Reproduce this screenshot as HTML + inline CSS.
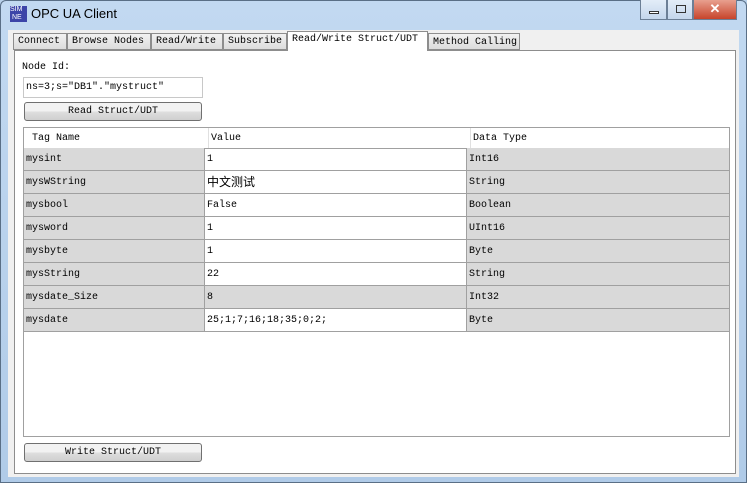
<!DOCTYPE html><html><head><meta charset="utf-8"><style>
*{margin:0;padding:0;box-sizing:border-box}
body{width:747px;height:483px;overflow:hidden;background:#b9d1ea;font-family:"Liberation Mono","Noto Sans CJK SC",monospace;font-size:10px;color:#000;position:relative}
.frame{position:absolute;left:0;top:0;width:747px;height:483px;background:linear-gradient(#c2d9f1,#b0cbe8);border:1px solid #5a6f86;border-radius:6px 6px 0 0}
.title{position:absolute;left:31px;top:6px;font-family:"Liberation Sans",sans-serif;font-size:13px}
.icon{position:absolute;left:10px;top:6px;width:17px;height:16px;background:#3c44a8;color:#fff;font:7px "Liberation Sans",sans-serif;line-height:8px}
.wb{position:absolute;top:0;height:20px;border:1px solid #6c7f96;border-top:none}
.client{position:absolute;left:8px;top:30px;width:731px;height:447px;background:#f0f0f0}
.tab{position:absolute;top:33px;height:17px;background:linear-gradient(#f2f2f2,#dcdcdc);border:1px solid #8d8d8d;line-height:16px;padding-left:4px;white-space:nowrap}
.panel{position:absolute;left:14px;top:50px;width:722px;height:424px;background:#fff;border:1px solid #8d8d8d}
.btn{position:absolute;height:19px;border:1px solid #707070;border-radius:3px;background:linear-gradient(#f2f2f2 45%,#dddddd 55%,#cfcfcf);text-align:center;line-height:17px}
.grid{position:absolute;left:23px;top:127px;width:707px;height:310px;border:1px solid #a0a0a0;background:#fff}
.r{position:absolute;left:0;height:23px;width:705px;border-bottom:1px solid #a0a0a0}
.c{position:absolute;top:0;height:22px;line-height:24px;padding-left:2px;white-space:nowrap}
.g{background:#d9d9d9}
</style></head><body>
<div class="frame"></div>
<div class="icon">SIM<br>&nbsp;NE</div>
<div class="title">OPC UA Client</div>
<div class="wb" style="left:640px;width:27px;background:linear-gradient(#e3edf8,#c4d6ec)"><div style="position:absolute;left:8px;top:11px;width:10px;height:3px;border:1px solid #333;background:#fff"></div></div>
<div class="wb" style="left:667px;width:26px;background:linear-gradient(#e3edf8,#c4d6ec)"><div style="position:absolute;left:8px;top:5px;width:10px;height:8px;border:1px solid #333"></div></div>
<div class="wb" style="left:693px;width:44px;background:linear-gradient(#e8a08f,#c7442b);color:#fff;text-align:center;font:bold 13px 'Liberation Sans',sans-serif;line-height:18px">✕</div>
<div class="client"></div>
<div class="panel"></div>
<div class="tab" style="left:13px;width:54px">Connect</div>
<div class="tab" style="left:67px;width:84px">Browse Nodes</div>
<div class="tab" style="left:151px;width:72px">Read/Write</div>
<div class="tab" style="left:223px;width:64px">Subscribe</div>
<div class="tab" style="left:287px;top:31px;height:20px;width:141px;background:#fff;border-bottom:none;line-height:16px">Read/Write Struct/UDT</div>
<div class="tab" style="left:428px;width:92px;line-height:18px">Method Calling</div>
<div style="position:absolute;left:22px;top:62px">Node Id:</div>
<div style="position:absolute;left:23px;top:77px;width:180px;height:21px;border:1px solid #c8c8c8;line-height:19px;padding-left:2px">ns=3;s="DB1"."mystruct"</div>
<div class="btn" style="left:24px;top:102px;width:178px">Read Struct/UDT</div>
<div class="grid">
<div class="r" style="top:0;height:21px"><div class="c" style="left:6px;height:20px;line-height:22px">Tag Name</div><div class="c" style="left:184px;height:20px;line-height:22px;border-left:1px solid #e0e0e0">Value</div><div class="c" style="left:446px;height:20px;line-height:22px;border-left:1px solid #e0e0e0">Data Type</div></div>
</div>
<div style="position:absolute;left:24px;top:148px;width:705px">
<div class="r" style="top:0"><div class="c g" style="left:0;width:180px">mysint</div><div class="c" style="left:180px;width:262px;border-left:1px solid #a0a0a0">1</div><div class="c g" style="left:442px;width:263px;border-left:1px solid #a0a0a0">Int16</div></div>
<div class="r" style="top:23px"><div class="c g" style="left:0;width:180px">mysWString</div><div class="c" style="left:180px;width:262px;border-left:1px solid #a0a0a0;font-size:12px;line-height:22px;font-family:'Noto Sans CJK SC',sans-serif">中文测试</div><div class="c g" style="left:442px;width:263px;border-left:1px solid #a0a0a0">String</div></div>
<div class="r" style="top:46px"><div class="c g" style="left:0;width:180px">mysbool</div><div class="c" style="left:180px;width:262px;border-left:1px solid #a0a0a0">False</div><div class="c g" style="left:442px;width:263px;border-left:1px solid #a0a0a0">Boolean</div></div>
<div class="r" style="top:69px"><div class="c g" style="left:0;width:180px">mysword</div><div class="c" style="left:180px;width:262px;border-left:1px solid #a0a0a0">1</div><div class="c g" style="left:442px;width:263px;border-left:1px solid #a0a0a0">UInt16</div></div>
<div class="r" style="top:92px"><div class="c g" style="left:0;width:180px">mysbyte</div><div class="c" style="left:180px;width:262px;border-left:1px solid #a0a0a0">1</div><div class="c g" style="left:442px;width:263px;border-left:1px solid #a0a0a0">Byte</div></div>
<div class="r" style="top:115px"><div class="c g" style="left:0;width:180px">mysString</div><div class="c" style="left:180px;width:262px;border-left:1px solid #a0a0a0">22</div><div class="c g" style="left:442px;width:263px;border-left:1px solid #a0a0a0">String</div></div>
<div class="r" style="top:138px"><div class="c g" style="left:0;width:180px">mysdate_Size</div><div class="c g" style="left:180px;width:262px;border-left:1px solid #a0a0a0">8</div><div class="c g" style="left:442px;width:263px;border-left:1px solid #a0a0a0">Int32</div></div>
<div class="r" style="top:161px"><div class="c g" style="left:0;width:180px">mysdate</div><div class="c" style="left:180px;width:262px;border-left:1px solid #a0a0a0">25;1;7;16;18;35;0;2;</div><div class="c g" style="left:442px;width:263px;border-left:1px solid #a0a0a0">Byte</div></div>
</div>
<div class="btn" style="left:24px;top:443px;width:178px">Write Struct/UDT</div>
</body></html>
